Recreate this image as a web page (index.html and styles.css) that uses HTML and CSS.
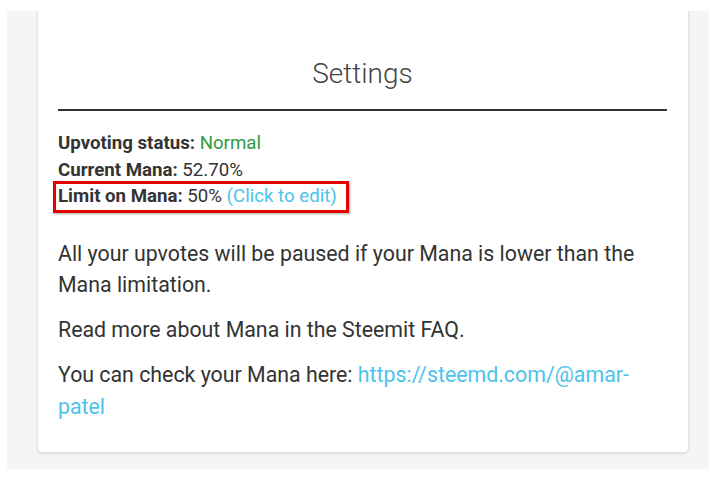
FILE: index.html
```html
<!DOCTYPE html>
<html>
<head>
<meta charset="utf-8">
<link rel="stylesheet" href="styles.css">
</head>
<body>
<div class="frame">
  <div class="panel">
    <div class="card">
      <h2 class="title">Settings</h2>
      <div class="status">
        <div><b>Upvoting status:</b> <span class="ok">Normal</span></div>
        <div><b>Current Mana:</b> 52.70%</div>
        <div><span class="hl"><b>Limit on Mana:</b> 50% <a class="link" href="#">(Click to edit)</a></span></div>
      </div>
      <p class="para first">All your upvotes will be paused if your Mana is lower than the Mana limitation.</p>
      <p class="para">Read more about Mana in the Steemit FAQ.</p>
      <p class="para last">You can check your Mana here: <a class="link" href="#">https://steemd.com/@amar-<wbr>patel</a></p>
    </div>
  </div>
</div>
</body>
</html>
```
FILE: styles.css
```css
html, body {
  margin: 0;
  padding: 0;
  background: #ffffff;
}
body {
  font-family: Roboto, "Liberation Sans", sans-serif;
  color: #333333;
}
.frame {
  padding: 11px 12px 14px 7px;
}
.panel {
  background: #f5f5f5;
  padding: 0 20px 16px 30px;
}
.card {
  background: #ffffff;
  border: 1px solid #e2e2e2;
  border-top: none;
  border-radius: 0 0 5px 5px;
  box-shadow: 0 1px 2px rgba(0, 0, 0, 0.12);
  padding: 46px 21px 29.5px 20px;
}
.title {
  margin: 0;
  font-size: 28px;
  line-height: 34px;
  font-weight: 300;
  color: #444444;
  text-align: center;
  padding-bottom: 18px;
  border-bottom: 2px solid #333333;
}
.status {
  margin-top: 19px;
  font-size: 18.67px;
  line-height: 26.67px;
}
.status b {
  font-weight: 700;
  color: #333333;
}
.ok {
  color: #2f9a3a;
}
.link {
  color: #4cc3ea;
  text-decoration: none;
}
.hl {
  display: inline-block;
  position: relative;
}
.hl::after {
  content: "";
  position: absolute;
  left: -5px;
  right: -12px;
  top: -2px;
  bottom: -3px;
  border: 3px solid #e60000;
  box-shadow: 1px 1px 2px rgba(0, 0, 0, 0.35);
}
.para {
  margin: 0 0 13.5px;
  font-size: 21.33px;
  line-height: 31.5px;
}
.para.first {
  margin-top: 27.5px;
}
.para.last {
  margin-bottom: 0;
}
```
